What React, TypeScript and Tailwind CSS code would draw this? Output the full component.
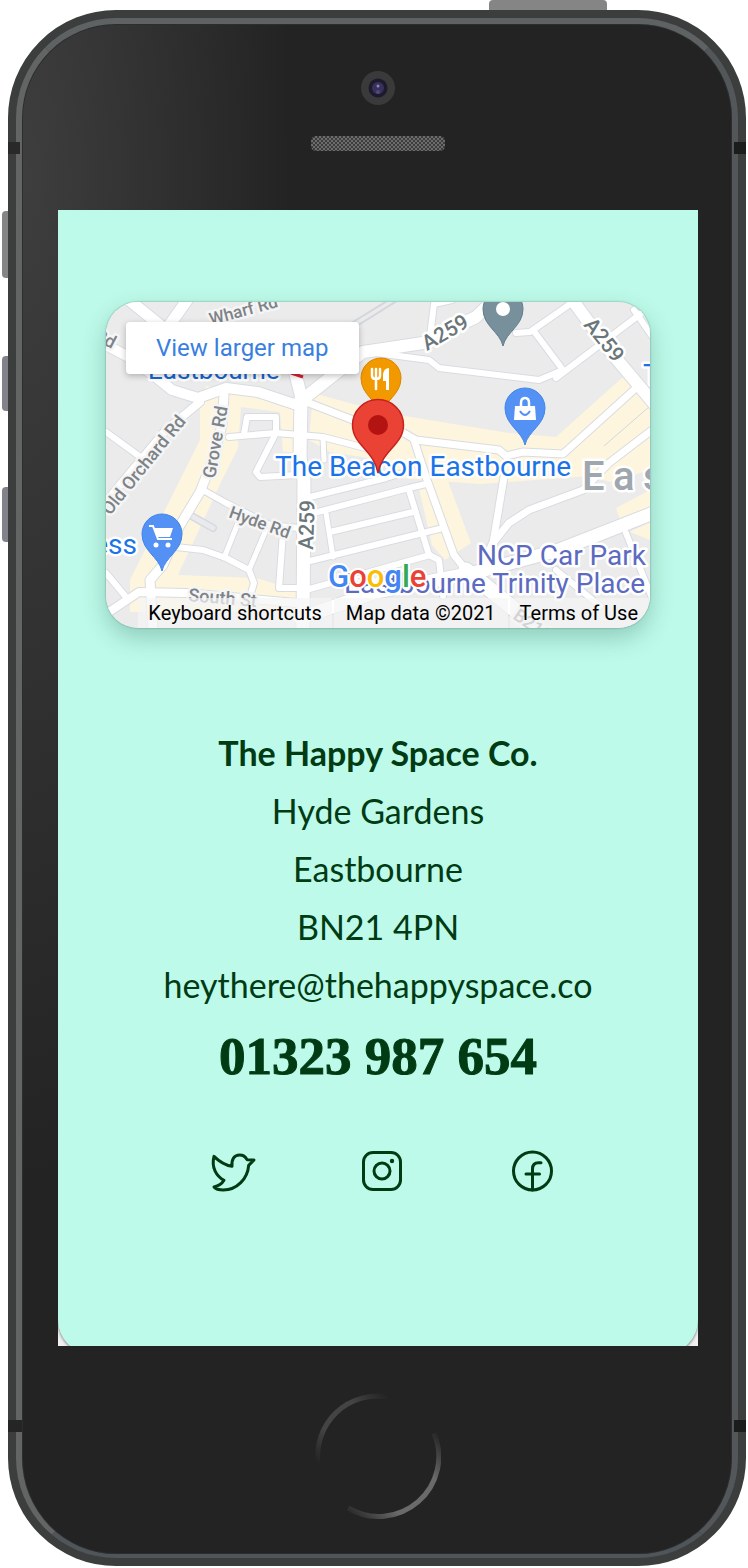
import React from "react";

type Road = { d: string; w: number };

const roads: Road[] = [
  { d: "M124 296 L166 330 L190 296", w: 10 },
  { d: "M106 345 L127 356 L152 374 L172 390 L198 398 L226 388 L258 392 L300 406", w: 9 },
  { d: "M106 432 L150 464", w: 5 },
  { d: "M200 402 L166 430 L106 502", w: 7 },
  { d: "M224 395 L222 425 L212 462 L200 492 L179 527 L163 565 L150 580 L153 630", w: 8 },
  { d: "M301 398 L300 457 L304 480 L303 630", w: 12 },
  { d: "M295 372 L302 400 L336 373 L363 352 L423 343 L476 317 L496 298", w: 11 },
  { d: "M309 403 L353 420 L404 433 L416 440 L499 450 L506 456 L523 452 L563 454 L636 388", w: 6 },
  { d: "M568 294 L609 350 L656 406", w: 11 },
  { d: "M229 437 L276 433 L323 437 L373 450", w: 5 },
  { d: "M244 434 L247 417 L276 417 L276 433 L256 472 L260 477 L298 475", w: 5 },
  { d: "M323 437 L324 460", w: 4 },
  { d: "M452 300 L434 304 L430 336", w: 5 },
  { d: "M376 353 L429 360 L439 368 L539 380 L563 370 L533 330", w: 5 },
  { d: "M516 333 L530 332 L573 302", w: 5 },
  { d: "M556 378 L643 312 M634 310 L652 336", w: 5 },
  { d: "M652 430 L609 463 L583 490 L529 510 L509 523 L493 543", w: 6 },
  { d: "M203 490 L226 503 L270 525 L298 528", w: 5 },
  { d: "M176 547 L203 550 L226 558 L249 570 L254 583 L251 593", w: 5 },
  { d: "M238 523 L224 558 M266 530 L249 570", w: 4 },
  { d: "M283 532 L279 588 L299 588", w: 5 },
  { d: "M106 614 L139 592 L186 593 L296 603", w: 7 },
  { d: "M106 573 L126 597", w: 5 },
  { d: "M310 497 L386 478 L412 470", w: 5 },
  { d: "M310 514 L409 488 L426 484", w: 5 },
  { d: "M330 532 L413 512", w: 5 },
  { d: "M306 562 L443 528", w: 5 },
  { d: "M306 590 L430 555", w: 5 },
  { d: "M326 513 L333 557", w: 4 },
  { d: "M414 440 L426 477 L454 555 L466 570", w: 6 },
  { d: "M409 490 L429 555 L439 560 L443 596", w: 5 },
  { d: "M504 477 L493 543", w: 6 },
  { d: "M493 543 L482 570", w: 7 },
  { d: "M300 618 L376 592 L473 573 L559 550 L656 512", w: 12 },
  { d: "M466 570 L530 622", w: 14 },
  { d: "M626 533 L652 598 M556 570 L600 606", w: 5 },
];

const areas = [
  "M313 393 L386 413 L509 433 L556 437 L623 377 L650 398 L650 470 L610 482 L590 476 L480 484 L400 478 L380 460 L330 452 L309 440Z",
  "M206 386 L256 397 L297 406 L297 452 L283 452 L280 412 L241 407 L238 448 L222 480 L178 575 L256 578 L296 590 L296 612 L130 612 L130 580 L150 540 L200 440 L200 410Z",
  "M418 484 L446 476 L471 543 L445 560 L432 545Z",
  "M616 508 L650 490 L650 512 L620 520Z",
  "M630 532 L650 522 L650 540Z",
];

function SmallPin({ x, y, fill, stroke, children }: {
  x: number;
  y: number;
  fill: string;
  stroke: string;
  children?: React.ReactNode;
}) {
  return (
    <g transform={`translate(${x} ${y})`}>
      <path
        d="M0 37 C-3 23 -20 17 -20 0 A20 20 0 0 1 20 0 C20 17 3 23 0 37Z"
        fill={fill}
        stroke={stroke}
        strokeWidth="1"
      />
      {children}
    </g>
  );
}

function StreetMap() {
  return (
    <svg
      viewBox="106 302 544 326"
      preserveAspectRatio="xMidYMid slice"
      className="block h-[326px] w-full font-[Roboto,sans-serif]"
      role="img"
      aria-label="Map of Eastbourne"
    >
      <rect x="106" y="302" width="544" height="326" fill="#ebebeb" />
      {areas.map((d) => (
        <path key={d} d={d} fill="#fef5de" />
      ))}
      <g fill="none" stroke="#d3d7db" strokeWidth="2">
        <path d="M340 330 L392 298 M344 334 L400 299" />
        <path d="M604 446 L650 406" strokeWidth="1" />
      </g>
      <path d="M188 514 L213 528" stroke="#d6dade" strokeWidth="8" strokeLinecap="round" />
      <path d="M188 514 L213 528" stroke="#e8eaed" strokeWidth="5" strokeLinecap="round" />
      <g fill="none" strokeLinejoin="round" strokeLinecap="round">
        {roads.map((r) => (
          <path key={r.d} d={r.d} stroke="#d8dce1" strokeWidth={r.w + 3} />
        ))}
        {roads.map((r) => (
          <path key={r.d} d={r.d} stroke="#ffffff" strokeWidth={r.w + 1} />
        ))}
      </g>

      <g
        fill="#7d8387"
        stroke="#f5f5f5"
        strokeWidth="5"
        strokeLinejoin="round"
        paintOrder="stroke"
        fontSize="18"
        fontWeight="500"
      >
        <text transform="translate(211 325) rotate(-15)" fontSize="17">Wharf Rd</text>
        <text transform="translate(93 339) rotate(28)">Rd</text>
        <text transform="translate(110 516) rotate(-51)">Old Orchard Rd</text>
        <text transform="translate(215 479) rotate(-80)">Grove Rd</text>
        <text transform="translate(228 517) rotate(20)" fontSize="17">Hyde Rd</text>
        <text transform="translate(188 601) rotate(5)">South St</text>
        <text transform="translate(512 618) rotate(35)">B2106</text>
      </g>
      <g
        fill="#6a7679"
        stroke="#ffffff"
        strokeWidth="5"
        strokeLinejoin="round"
        paintOrder="stroke"
        fontSize="21"
        fontWeight="500"
      >
        <text transform="translate(427 351) rotate(-30)">A259</text>
        <text transform="translate(583 325) rotate(51)">A259</text>
        <text transform="translate(313 550) rotate(-88)">A259</text>
      </g>

      <g stroke="#ffffff" strokeWidth="5" strokeLinejoin="round" paintOrder="stroke">
        <text x="582 613 643" y="490" fontSize="40" fontWeight="500" fill="#a0a6ae">Eas</text>
        <g fontSize="28">
          <text x="148" y="379" fontSize="26" fill="#1967d2">Eastbourne</text>
          <text x="643" y="384" fill="#1a73e8">T</text>
          <text x="137" y="554" textAnchor="end" fill="#1a73e8">ess</text>
          <text x="646" y="565" textAnchor="end" fill="#5c6bc0">NCP Car Park</text>
          <text x="645" y="593" textAnchor="end" fill="#5c6bc0">Eastbourne Trinity Place</text>
          <text x="275" y="476" fill="#1a73e8">The Beacon Eastbourne</text>
        </g>
      </g>
      <path d="M291 373 L303 377" stroke="#d9202f" strokeWidth="3" />

      <SmallPin x={503} y={309} fill="#78909c" stroke="#607d8b">
        <circle r="7" fill="#ffffff" />
      </SmallPin>
      <SmallPin x={381} y={378} fill="#f29900" stroke="#db8500">
        <path
          d="M-9 -9 V-2 Q-9 1 -5 1 Q-1 1 -1 -2 V-9 M-5 -9 V11"
          fill="none"
          stroke="#ffffff"
          strokeWidth="2.5"
          strokeLinecap="round"
        />
        <path d="M8 -10 V12 H5 V3 H2 V-4 Q3 -10 8 -10Z" fill="#ffffff" />
      </SmallPin>
      <SmallPin x={525} y={408} fill="#5491f5" stroke="#4285e8">
        <path d="M-10 -2 H10 L11 12 H-11Z" fill="#ffffff" />
        <path d="M-4 -2 V-5 Q-4 -10 0 -10 Q4 -10 4 -5 V-2" fill="none" stroke="#ffffff" strokeWidth="2.5" />
        <path d="M-5 3 Q0 11 5 3" fill="none" stroke="#5491f5" strokeWidth="2" />
      </SmallPin>
      <SmallPin x={162} y={534} fill="#5491f5" stroke="#4285e8">
        <path d="M-13 -8 H-9 L-4 5 H10" fill="none" stroke="#ffffff" strokeWidth="2" />
        <path d="M-8 -6 H11 L8 3 H-5Z" fill="#ffffff" />
        <circle cx="-6" cy="11" r="2.5" fill="#ffffff" />
        <circle cx="6" cy="11" r="2.5" fill="#ffffff" />
      </SmallPin>
      <g transform="translate(378 425)">
        <path
          d="M0 48 C-4 25 -25.500 20 -25.500 0 A25.500 25.500 0 0 1 25.500 0 C25.500 20 4 25 0 48Z"
          fill="#ea4335"
          stroke="#c5221f"
          strokeWidth="1.5"
        />
        <circle r="10" fill="#b31412" />
      </g>

      <text
        x="328"
        y="587"
        fontSize="31"
        fontWeight="500"
        stroke="#ffffff"
        strokeWidth="4"
        strokeLinejoin="round"
        paintOrder="stroke"
      >
        <tspan fill="#4285f4">G</tspan>
        <tspan fill="#ea4335">o</tspan>
        <tspan fill="#fbbc04">o</tspan>
        <tspan fill="#4285f4">g</tspan>
        <tspan fill="#34a853">l</tspan>
        <tspan fill="#ea4335">e</tspan>
      </text>
    </svg>
  );
}

function MapCard() {
  return (
    <div className="relative overflow-hidden rounded-[32px] font-[Roboto,sans-serif] shadow-[0_10px_24px_rgba(0,60,40,0.24),0_0_2px_rgba(0,0,0,0.4)]">
      <StreetMap />
      <a
        href="#map"
        className="absolute top-5 left-5 rounded-sm bg-white px-[30px] py-2.5 text-2xl text-[#3a7fe0] shadow-[0_2px_6px_rgba(0,0,0,0.25)]"
      >
        View larger map
      </a>
      <div className="absolute right-0 bottom-0 flex gap-0.5 text-xl leading-[30px] text-black">
        <button type="button" className="bg-[#f5f5f5]/70 px-2.5">Keyboard shortcuts</button>
        <span className="bg-[#f5f5f5]/70 px-3">Map data ©2021</span>
        <a href="#terms" className="bg-[#f5f5f5]/70 pr-3 pl-2.5">Terms of Use</a>
      </div>
    </div>
  );
}

function SocialLinks() {
  return (
    <nav aria-label="Social" className="flex justify-center gap-[102px] pt-[49px] pl-2">
      <a href="#twitter" aria-label="Twitter" className="size-12">
        <svg viewBox="-5 0 144 144" fill="none" stroke="currentColor" strokeWidth="9" strokeLinecap="round" strokeLinejoin="round">
          <path d="M13 28 C28 43 45 54 67 58 C65 36 74 24 90 24 C101 24 108 30 112 38 L133 39 L117 55 C114 95 82 129 41 129 C27 129 17 125 13 120 C27 117 37 110 43 100 C21 88 4 62 13 28Z" />
        </svg>
      </a>
      <a href="#instagram" aria-label="Instagram" className="size-12">
        <svg viewBox="0 0 48 48" fill="none" stroke="currentColor" strokeWidth="3">
          <rect x="5.500" y="5.500" width="37" height="37" rx="9.500" />
          <circle cx="24" cy="24" r="8" />
          <circle cx="34" cy="14" r="2.2" fill="currentColor" stroke="none" />
        </svg>
      </a>
      <a href="#facebook" aria-label="Facebook" className="size-12">
        <svg viewBox="0 0 48 48" fill="none" stroke="currentColor" strokeWidth="3" strokeLinecap="round">
          <circle cx="24.500" cy="24" r="19" />
          <path d="M24.500 43 V22 Q24.500 15.800 30.500 15.800 H33 M18 27 H31.500" />
        </svg>
      </a>
    </nav>
  );
}

function ContactCard() {
  return (
    <section className="-mb-2 flex flex-col rounded-b-[34px] bg-[#bdfae9] px-12 pt-[92px] pb-[159px] text-center font-[Lato,sans-serif] text-[#003b14] shadow-[0_1px_3px_rgba(0,0,0,0.5)]">
      <MapCard />
      <address className="flex flex-col pt-24 text-[34px] leading-[58px] not-italic">
        <strong className="font-bold">The Happy Space Co.</strong>
        <span>Hyde Gardens</span>
        <span>Eastbourne</span>
        <span>BN21 4PN</span>
        <a href="mailto:heythere@thehappyspace.co">heythere@thehappyspace.co</a>
        <a
          href="tel:01323987654"
          className="font-['Liberation_Serif',serif] text-[53px] leading-[84px] font-bold [-webkit-text-stroke:1px_#003b14]"
        >
          01323 987 654
        </a>
      </address>
      <SocialLinks />
    </section>
  );
}

function HomeButton() {
  return (
    <svg viewBox="0 0 126 126" className="size-[126px]" fill="none" strokeWidth="5" aria-hidden="true">
      <defs>
        <linearGradient id="ringTop" x1="0" y1="1" x2="1" y2="0">
          <stop offset="0" stopColor="#444" stopOpacity="0" />
          <stop offset="0.3" stopColor="#444" />
          <stop offset="0.7" stopColor="#444" />
          <stop offset="1" stopColor="#444" stopOpacity="0" />
        </linearGradient>
        <linearGradient id="ringBottom" x1="0" y1="1" x2="1" y2="0">
          <stop offset="0" stopColor="#6a6a6a" stopOpacity="0" />
          <stop offset="0.3" stopColor="#6a6a6a" />
          <stop offset="0.7" stopColor="#6a6a6a" />
          <stop offset="1" stopColor="#6a6a6a" stopOpacity="0" />
        </linearGradient>
      </defs>
      <path d="M3 70 A60 60 0 0 1 73 4" stroke="url(#ringTop)" />
      <path d="M33 115 A60 60 0 0 0 119 40" stroke="url(#ringBottom)" />
    </svg>
  );
}

export default function App() {
  return (
    <main className="overflow-hidden bg-white pt-2.5 pr-0.5 pb-0.5 pl-2">
      <div className="relative">
        <span className="absolute -top-2.5 right-[139px] h-2.5 w-[118px] rounded-t bg-[#858585]" />
        <div className="absolute top-[201px] -left-1.5 flex w-1.5 flex-col">
          <span className="h-[67px] rounded-l bg-[#858585]" />
          <span className="mt-[78px] h-[55px] rounded-l bg-[#82828a]" />
          <span className="mt-[76px] h-[55px] rounded-l bg-[#82828a]" />
        </div>

        <div className="rounded-[108px] border-8 border-[#3b3e3d] bg-[#3b3e3d]">
          <div className="rounded-[100px] border-6 border-b-4 border-t-[#5f6262] border-r-[#53575a] border-b-[#50555a] border-l-[#636464] bg-[#232323] bg-[radial-gradient(ellipse_270px_1000px_at_0%_10%,#3e3e3e,#232323)] pr-[34px] pl-9 [box-shadow:inset_0_0_0_1px_#2b2d2e]">
            <header className="flex h-[186px] flex-col items-center pt-[47px]">
              <svg viewBox="0 0 34 34" className="size-[34px]" aria-hidden="true">
                <circle cx="17" cy="17" r="17" fill="#3a3a3a" />
                <circle cx="17" cy="17" r="9.500" fill="#1d1a2c" />
                <circle cx="17" cy="17" r="6" fill="#37325c" />
                <circle cx="17" cy="15" r="1.500" fill="#8a86b4" />
                <circle cx="17" cy="21" r="2" fill="#4f4a80" />
              </svg>
              <svg viewBox="0 0 134 15" className="mt-[31px] h-[15px] w-[134px]" aria-hidden="true">
                <defs>
                  <pattern id="grille" width="4" height="4" patternUnits="userSpaceOnUse">
                    <rect width="4" height="4" fill="#3c3c3c" />
                    <rect width="2" height="2" fill="#6c6c6c" />
                    <rect x="2" y="2" width="2" height="2" fill="#6c6c6c" />
                  </pattern>
                </defs>
                <rect width="134" height="15" rx="5" fill="url(#grille)" />
              </svg>
            </header>
            <div className="overflow-hidden bg-[#f1f1f1]">
              <ContactCard />
            </div>
            <footer className="flex h-[208px] justify-center pt-[47px]">
              <HomeButton />
            </footer>
          </div>
        </div>

        <div className="absolute inset-x-0 top-[132px] flex justify-between">
          <span className="h-3 w-3 bg-[#292929]" />
          <span className="h-3 w-3 bg-[#1b1d1c]" />
        </div>
        <div className="absolute inset-x-0 bottom-[134px] flex justify-between">
          <span className="h-3 w-3.5 bg-[#252525]" />
          <span className="h-3 w-3 bg-[#1b1d1c]" />
        </div>
      </div>
    </main>
  );
}
